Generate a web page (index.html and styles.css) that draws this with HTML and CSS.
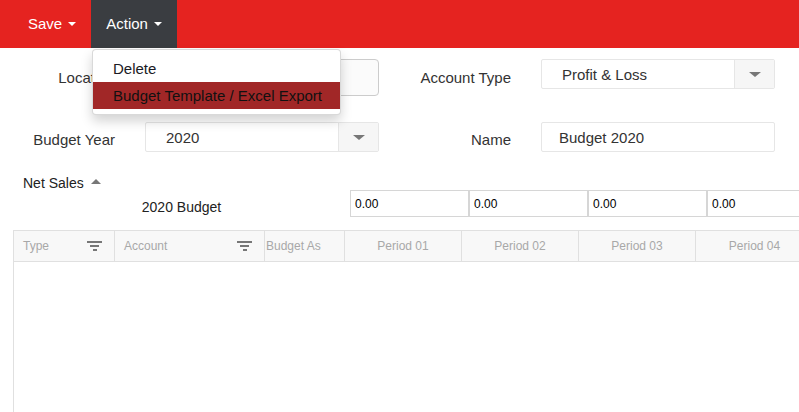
FILE: index.html
```html
<!DOCTYPE html>
<html>
<head>
<meta charset="utf-8">
<link rel="stylesheet" href="styles.css">
</head>
<body>
<div class="page">
  <header class="topbar">
    <div class="tb-btn">Save <span class="caret"></span></div>
    <div class="tb-btn active">Action <span class="caret"></span></div>
  </header>

  <ul class="menu">
    <li class="menu-item">Delete</li>
    <li class="menu-item hl">Budget Template / Excel Export</li>
  </ul>

  <section class="form">
    <label class="lbl">Location</label>
    <div class="textbox"></div>
    <label class="lbl">Account Type</label>
    <div class="select top">
      <span class="sel-val">Profit &amp; Loss</span>
      <span class="sel-arrow"><span class="tri"></span></span>
    </div>

    <label class="lbl lower">Budget Year</label>
    <div class="select">
      <span class="sel-val">2020</span>
      <span class="sel-arrow"><span class="tri"></span></span>
    </div>
    <label class="lbl lower">Name</label>
    <div class="select plain">
      <span class="sel-val name">Budget 2020</span>
    </div>
  </section>

  <div class="netsales">Net Sales <span class="tri-up"></span></div>

  <div class="budget-row">
    <div class="budget-lbl">2020 Budget</div>
    <div class="num">0.00</div>
    <div class="num">0.00</div>
    <div class="num">0.00</div>
    <div class="num">0.00</div>
  </div>

  <div class="grid">
    <div class="grid-head">
      <div class="th c-type"><span>Type</span><span class="filter"><i></i><i></i><i></i></span></div>
      <div class="th c-acc"><span>Account</span><span class="filter"><i></i><i></i><i></i></span></div>
      <div class="th c-as">Budget As</div>
      <div class="th c-per">Period 01</div>
      <div class="th c-per">Period 02</div>
      <div class="th c-per">Period 03</div>
      <div class="th c-per">Period 04</div>
    </div>
    <div class="grid-body"></div>
  </div>
</div>
</body>
</html>
```

FILE: styles.css
```css
* { box-sizing: border-box; }
html, body { margin: 0; padding: 0; }
body {
  font-family: "Liberation Sans", Arial, sans-serif;
  color: #333;
  background: #fff;
  width: 799px;
  height: 412px;
  overflow: hidden;
}
.page { position: relative; width: 799px; height: 412px; overflow: hidden; }

.topbar {
  height: 48px;
  background: #e52320;
  display: flex;
  padding-left: 13px;
}
.tb-btn {
  display: flex;
  align-items: center;
  padding: 0 15px 2px;
  color: #fff;
  font-size: 15px;
  height: 48px;
}
.tb-btn.active { background: #3a3d41; }
.caret {
  display: inline-block;
  width: 0; height: 0;
  margin-left: 6px;
  margin-top: 2px;
  border-left: 4px solid transparent;
  border-right: 4px solid transparent;
  border-top: 4px solid #fff;
}

.menu {
  position: absolute;
  top: 49px;
  left: 92px;
  width: 249px;
  margin: 0;
  padding: 5px 0;
  list-style: none;
  background: #fff;
  border: 1px solid rgba(0,0,0,0.15);
  border-radius: 4px;
  box-shadow: 0 6px 12px rgba(0,0,0,0.175);
  z-index: 10;
}
.menu-item {
  padding: 3px 20px;
  line-height: 21px;
  font-size: 15px;
  color: #1a1a24;
  white-space: nowrap;
}
.menu-item.hl { background: #a12727; color: #111; }

.form {
  display: grid;
  grid-template-columns: 115px 234px 102px 234px;
  column-gap: 30px;
  row-gap: 26px;
  margin-top: 11px;
  align-items: center;
}
.lbl {
  text-align: right;
  font-size: 15px;
  color: #333;
  white-space: nowrap;
}
.lbl.lower { padding-top: 5px; }
.textbox {
  height: 37px;
  border: 1px solid #ccc;
  border-radius: 4px;
  background: #fbfbfb;
}
.select {
  height: 30px;
  border: 1px solid #e6e6e6;
  border-radius: 2px;
  display: flex;
  align-items: stretch;
  font-size: 15px;
  color: #333;
  background: #fff;
}
.select.top { align-self: start; height: 30px; }
.select.plain { height: 30px; }
.sel-val {
  flex: 1;
  display: flex;
  align-items: center;
  padding-left: 20px;
}
.sel-val.name { padding-left: 17px; }
.sel-arrow {
  width: 40px;
  background: #f6f6f6;
  border-left: 1px solid #e6e6e6;
  display: flex;
  align-items: center;
  justify-content: center;
}
.tri {
  width: 0; height: 0;
  border-left: 6px solid transparent;
  border-right: 6px solid transparent;
  border-top: 5px solid #777;
}

.netsales {
  margin-top: 23px;
  padding-left: 23px;
  font-size: 14px;
  color: #222;
  display: flex;
  align-items: center;
  height: 15px;
}
.tri-up {
  display: inline-block;
  width: 0; height: 0;
  margin-left: 7px;
  margin-bottom: 3px;
  border-left: 5px solid transparent;
  border-right: 5px solid transparent;
  border-bottom: 5px solid #777;
}

.budget-row {
  display: flex;
  align-items: center;
  margin-top: 0;
  padding-left: 13px;
  height: 27px;
  white-space: nowrap;
}
.budget-lbl {
  width: 337px;
  flex: none;
  text-align: center;
  font-size: 14px;
  color: #222;
  padding-top: 6px;
}
.num {
  flex: none;
  width: 119px;
  height: 27px;
  border: 1px solid #d6d6d6;
  font-size: 12px;
  color: #000;
  padding-left: 4px;
  display: flex;
  align-items: center;
}

.grid {
  margin-top: 13px;
  margin-left: 13px;
  width: 820px;
  height: 200px;
  border-left: 1px solid #e0e0e0;
  border-top: 1px solid #e0e0e0;
}
.grid-head {
  display: flex;
  height: 31px;
  background: #f8f8f8;
  border-bottom: 1px solid #e0e0e0;
}
.th {
  flex: none;
  display: flex;
  align-items: center;
  font-size: 12px;
  color: #a8a8a8;
  border-right: 1px solid #e0e0e0;
  white-space: nowrap;
}
.th:last-child { border-right: none; }
.c-type { width: 101px; padding-left: 9px; justify-content: space-between; padding-right: 12px; }
.c-acc { width: 150px; padding-left: 9px; justify-content: space-between; padding-right: 12px; }
.c-as { width: 80px; padding-left: 1px; }
.c-per { width: 117px; justify-content: center; }
.filter {
  display: flex;
  flex-direction: column;
  align-items: center;
  gap: 2px;
  width: 15px;
}
.filter i {
  display: block;
  height: 2px;
  background: #777;
}
.filter i:nth-child(1) { width: 15px; }
.filter i:nth-child(2) { width: 9px; }
.filter i:nth-child(3) { width: 4px; }
.grid-body { height: 170px; background: #fff; }
```
